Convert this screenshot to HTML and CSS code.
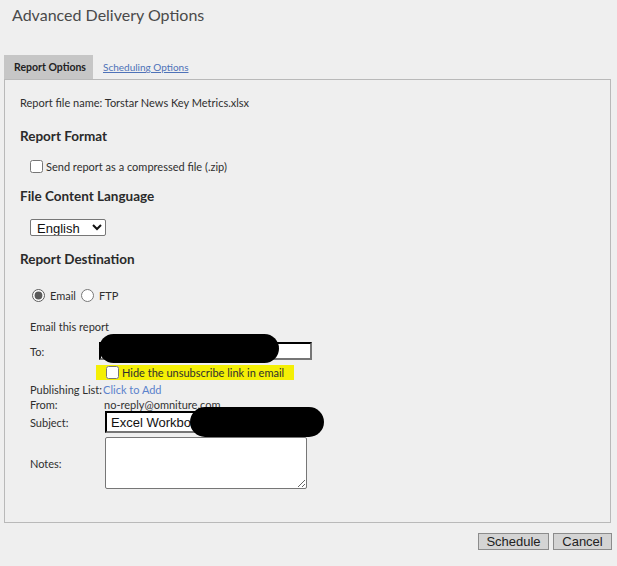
FILE: index.html
```html
<!DOCTYPE html>
<html>
<head>
<meta charset="utf-8">
<link rel="stylesheet" href="styles.css">
</head>
<body>
<h1 class="title">Advanced Delivery Options</h1>
<div class="tabs">
  <div class="tab active">Report Options</div>
  <a class="tab-link" href="#">Scheduling Options</a>
</div>
<div class="panel">
  <div class="filename">Report file name: Torstar News Key Metrics.xlsx</div>
  <h2 class="heading h-format">Report Format</h2>
  <label class="check-row"><input type="checkbox" class="cb"><span>Send report as a compressed file (.zip)</span></label>
  <h2 class="heading h-lang">File Content Language</h2>
  <div class="select-row"><select class="lang"><option>English</option></select></div>
  <h2 class="heading h-dest">Report Destination</h2>
  <div class="radio-row">
    <input type="radio" name="d" class="rb" checked><span>Email</span>
    <input type="radio" name="d" class="rb rb2"><span>FTP</span>
  </div>
  <div class="email-label">Email this report</div>
  <div class="form">
    <div class="lbl to-lbl">To:</div>
    <div class="field to-field">
      <input type="text" class="to-input">
      <span class="redact redact-to"></span>
    </div>
    <div class="lbl"></div>
    <div class="field"><label class="hl"><input type="checkbox" class="cb"><span>Hide the unsubscribe link in email</span></label></div>
    <div class="pub-row"><span class="pub-lbl">Publishing List:</span><a href="#" class="add">Click to Add</a></div>
    <div class="lbl from">From:</div>
    <div class="field from">no-reply@omniture.com</div>
    <div class="lbl subj-lbl">Subject:</div>
    <div class="field subj-field">
      <input type="text" class="subj-input" value="Excel Workbook">
      <span class="redact redact-subj"></span>
    </div>
    <div class="lbl notes-lbl">Notes:</div>
    <div class="field notes-field"><textarea class="notes"></textarea></div>
  </div>
</div>
<div class="actions">
  <button class="btn btn-schedule">Schedule</button>
  <button class="btn btn-cancel">Cancel</button>
</div>
</body>
</html>
```
FILE: styles.css
```css
* { box-sizing: border-box; }
body {
  margin: 0;
  background: #efefef;
  font-family: Lato, "Open Sans", sans-serif;
  color: #2e2e2e;
  width: 617px;
  height: 566px;
  overflow: hidden;
}
.title {
  margin: 0;
  padding-left: 12px;
  font-size: 16px;
  font-weight: normal;
  line-height: 30px;
  color: #4a4a4a;
}
.tabs {
  display: flex;
  align-items: center;
  margin: 25px 0 0 4px;
  height: 24px;
}
.tab.active {
  width: 89px;
  height: 24px;
  line-height: 24px;
  background: #c6c6c6;
  font-size: 10.5px;
  font-weight: bold;
  padding-left: 10px;
  color: #222;
}
.tab-link {
  margin-left: 10px;
  font-size: 10px;
  color: #4e72b8;
  text-decoration: underline;
}
.panel {
  margin: 0 6px 0 4px;
  height: 444px;
  border: 1px solid #b9b9b9;
  padding: 15px 15px 0 15px;
}
.filename {
  font-size: 11px;
  line-height: 16px;
}
.heading {
  margin: 0;
  font-size: 13.5px;
  font-weight: bold;
  line-height: 20px;
  color: #2a2a2a;
}
.h-format { margin-top: 15px; }
.h-lang { margin-top: 12px; }
.h-dest { margin-top: 13px; }
.check-row {
  display: flex;
  align-items: center;
  margin: 12px 0 0 10px;
  height: 16px;
  font-size: 11px;
}
.cb {
  width: 13px;
  height: 13px;
  margin: 0 3px 0 0;
  accent-color: #666;
}
.select-row {
  display: flex;
  align-items: flex-start;
  margin: 13px 0 0 10px;
  height: 17px;
}
.lang {
  width: 76px;
  height: 17px;
  margin: 0;
  font-family: "Liberation Sans", Arial, sans-serif;
  font-size: 13px;
  line-height: 15px;
  padding: 0 2px;
  border: 1px solid #767676;
  background: #fff;
  border-radius: 2px;
  color: #111;
}
.radio-row {
  display: flex;
  align-items: center;
  margin: 18px 0 0 12px;
  height: 16px;
  font-size: 11px;
}
.rb {
  width: 13px;
  height: 13px;
  margin: 0 5px 0 0;
  accent-color: #5a5a5a;
}
.rb2 { margin-left: 5px; }
.email-label {
  margin: 16px 0 0 10px;
  font-size: 11px;
  line-height: 16px;
}
.form {
  display: grid;
  grid-template-columns: 74px 1fr;
  margin: 7px 0 0 10px;
  font-size: 11px;
}
.lbl, .field {
  display: flex;
  align-items: center;
}
.to-field { position: relative; margin-left: -5px; }
.to-lbl, .to-field { height: 18px; }
.to-input {
  width: 213px;
  height: 18px;
  border: 2px inset #767676;
  border-top-color: #555;
  border-left-color: #555;
  background: #fff;
}
.redact {
  position: absolute;
  background: #000;
  border-radius: 15px;
}
.redact-to {
  left: 0;
  top: -8px;
  width: 180px;
  height: 29px;
}
.hl {
  display: flex;
  align-items: center;
  margin-top: 5px;
  margin-left: -8px;
  height: 15px;
  padding: 0 10px 0 10px;
  background: #f4ef05;
  font-size: 11px;
}
.hl .cb { margin-right: 3px; }
.pub-row {
  grid-column: 1 / 3;
  display: flex;
  align-items: center;
  height: 15px;
  margin-top: 2px;
  white-space: nowrap;
}
.add {
  margin-left: 1px;
  color: #5b82cc;
  text-decoration: none;
}
.from {
  height: 14px;
}
.from.field { color: #333; }
.subj-lbl, .subj-field { height: 22px; }
.subj-field { position: relative; margin-left: 1px; }
.subj-input {
  width: 200px;
  height: 22px;
  border: 2px inset #767676;
  border-top-color: #444;
  border-left-color: #444;
  background: #fff;
  font-family: "Liberation Sans", Arial, sans-serif;
  font-size: 13px;
  padding: 0 4px;
  color: #111;
}
.redact-subj {
  left: 85px;
  top: -4px;
  width: 134px;
  height: 30px;
}
.notes-lbl, .notes-field { margin-top: 4px; }
.notes-field { margin-left: 1px; }
.notes {
  width: 202px;
  height: 52px;
  border: 1px solid #767676;
  background: #fff;
  border-radius: 2px;
}
.actions {
  display: flex;
  justify-content: flex-end;
  gap: 4px;
  margin: 10px 5px 0 0;
}
.btn {
  height: 17px;
  padding: 0;
  font-family: "Liberation Sans", Arial, sans-serif;
  font-size: 13px;
  line-height: 15px;
  background: #d4d4d4;
  border: 1px solid #8c8c8c;
  color: #222;
}
.btn-schedule { width: 71px; }
.btn-cancel { width: 59px; }
```
